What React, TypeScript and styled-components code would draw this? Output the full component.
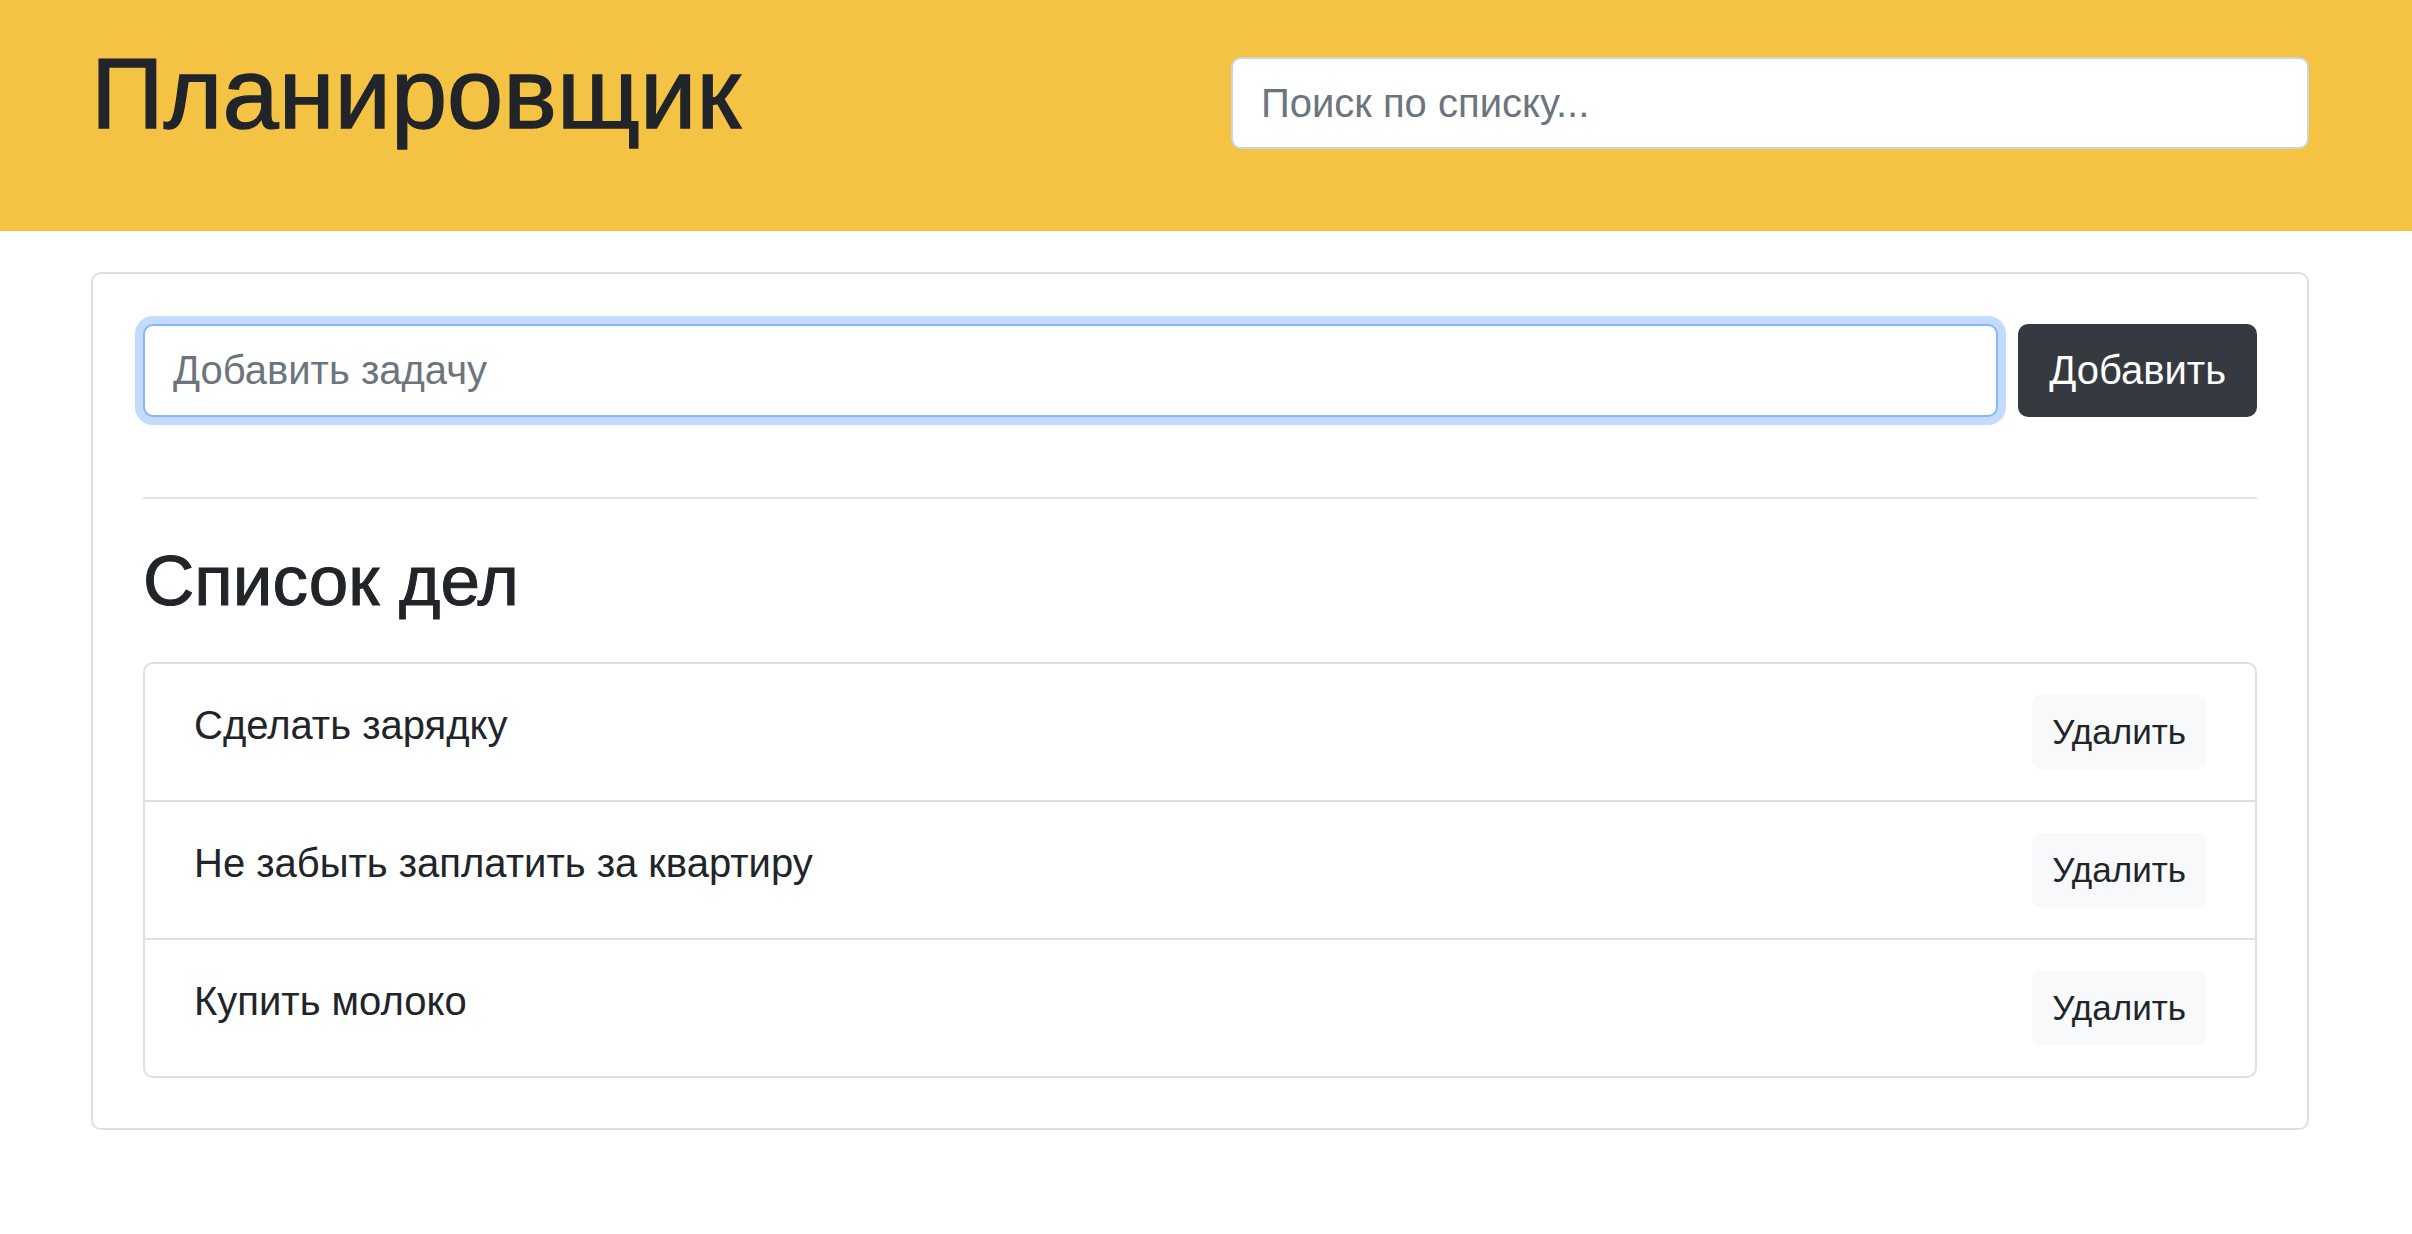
import React from 'react';
import styled, { createGlobalStyle } from 'styled-components';

const GlobalStyle = createGlobalStyle`
  html, body { margin: 0; padding: 0; background: #ffffff; }
  body {
    font-family: "Liberation Sans", Arial, sans-serif;
    color: #212529;
  }
  * { box-sizing: border-box; }
`;

const Header = styled.header`
  background: #f5c343;
  height: 231px;
  padding-top: 33px;
`;

const HeaderRow = styled.div`
  width: 2218px;
  margin-left: 91px;
  display: grid;
  grid-template-columns: 1fr 1078px;
  align-items: start;
`;

const Title = styled.h1`
  margin: 0;
  font-size: 101px;
  font-weight: 400;
  line-height: 120px;
  color: #212529;
  -webkit-text-stroke: 1.4px #212529;
`;

const TextField = styled.input<{ $focused?: boolean }>`
  display: block;
  width: 100%;
  height: 93px;
  padding: 0 28px;
  font-family: "Liberation Sans", Arial, sans-serif;
  font-size: 40px;
  color: #495057;
  background: #ffffff;
  border: 2px solid ${(p) => (p.$focused ? '#86b7fe' : '#ced4da')};
  border-radius: 10px;
  outline: none;
  box-shadow: ${(p) => (p.$focused ? '0 0 0 8px rgba(13, 110, 253, 0.25)' : 'none')};
  &::placeholder { color: #6c757d; opacity: 1; }
`;

const SearchField = styled(TextField)`
  margin-top: 24px;
  height: 92px;
`;

const Main = styled.main`
  width: 2218px;
  margin: 41px 0 0 91px;
`;

const Card = styled.section`
  border: 2px solid #dfdfdf;
  border-radius: 10px;
  padding: 50px;
`;

const AddRow = styled.form`
  display: flex;
  align-items: center;
  gap: 20px;
`;

const AddInputWrap = styled.div`
  flex: 1;
`;

const DarkButton = styled.button`
  flex: none;
  height: 93px;
  padding: 0 31px;
  border: none;
  border-radius: 10px;
  background: #343a40;
  color: #ffffff;
  font-family: "Liberation Sans", Arial, sans-serif;
  font-size: 40px;
  cursor: pointer;
`;

const Divider = styled.hr`
  border: 0;
  border-top: 2px solid #e2e2e2;
  margin: 80px 0 40px;
`;

const SectionTitle = styled.h3`
  margin: 0 0 39px;
  font-size: 71px;
  font-weight: 400;
  line-height: 84px;
  color: #212529;
  -webkit-text-stroke: 1px #212529;
`;

const List = styled.ul`
  list-style: none;
  margin: 0;
  padding: 0;
  border: 2px solid #dfdfdf;
  border-radius: 10px;
`;

const Item = styled.li`
  display: flex;
  justify-content: space-between;
  align-items: flex-start;
  padding: 31px 49px 31px 49px;
  & + & { border-top: 2px solid #dfdfdf; }
`;

const ItemText = styled.span`
  font-size: 40px;
  line-height: 60px;
  color: #212529;
`;

const LightButton = styled.button`
  flex: none;
  height: 74px;
  padding: 0 20px;
  border: none;
  border-radius: 8px;
  background: #f8f9fa;
  color: #212529;
  font-family: "Liberation Sans", Arial, sans-serif;
  font-size: 35px;
  cursor: pointer;
`;

const tasks = ['Сделать зарядку', 'Не забыть заплатить за квартиру', 'Купить молоко'];

export default function App() {
  return (
    <>
      <GlobalStyle />
      <Header>
        <HeaderRow>
          <Title>Планировщик</Title>
          <SearchField type="text" placeholder="Поиск по списку..." />
        </HeaderRow>
      </Header>
      <Main>
        <Card>
          <AddRow onSubmit={(e) => e.preventDefault()}>
            <AddInputWrap>
              <TextField $focused type="text" placeholder="Добавить задачу" />
            </AddInputWrap>
            <DarkButton type="submit">Добавить</DarkButton>
          </AddRow>
          <Divider />
          <SectionTitle>Список дел</SectionTitle>
          <List>
            {tasks.map((t) => (
              <Item key={t}>
                <ItemText>{t}</ItemText>
                <LightButton type="button">Удалить</LightButton>
              </Item>
            ))}
          </List>
        </Card>
      </Main>
    </>
  );
}
